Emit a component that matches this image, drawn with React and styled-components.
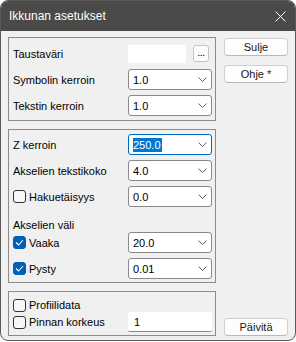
import React from 'react';
import styled, { createGlobalStyle } from 'styled-components';

const Global = createGlobalStyle`
  html, body { margin: 0; padding: 0; background: #ffffff; }
  body { font-family: "Liberation Sans", Arial, sans-serif; }
  * { box-sizing: border-box; }
`;

const Window = styled.div`
  width: 296px;
  height: 341px;
  border: 1px solid #5a5a5a;
  border-radius: 8px;
  overflow: hidden;
  background: #f0f0f0;
  display: flex;
  flex-direction: column;
`;

const TitleBar = styled.div`
  height: 30px;
  flex: none;
  background: #4a4a48;
  color: #ffffff;
  display: flex;
  align-items: center;
  justify-content: space-between;
  padding: 0 9px 0 8px;
  font-size: 12px;
`;

const CloseIcon = styled.svg`
  width: 11px;
  height: 11px;
  display: block;
`;

const Body = styled.div`
  flex: 1;
  display: flex;
  gap: 8px;
  padding: 6px 7px 3px 7px;
`;

const LeftCol = styled.div`
  width: 208px;
  display: flex;
  flex-direction: column;
  gap: 8px;
`;

const RightCol = styled.div`
  width: 64px;
  display: flex;
  flex-direction: column;
  padding: 1px 0 1px;
`;

const Group = styled.div`
  border: 1px solid #8c8c8c;
  height: ${p => p.$h}px;
  padding: ${p => p.$pt}px 3px 0 4px;
  display: flex;
  flex-direction: column;
`;

const Row = styled.div`
  display: flex;
  align-items: center;
  height: ${p => p.$h ?? 21}px;
  margin-top: ${p => p.$mt ?? 0}px;
  font-size: 11px;
  color: #000;
`;

const Label = styled.span`
  width: 115px;
  flex: none;
  display: flex;
  align-items: center;
  gap: 3px;
  white-space: nowrap;
`;

const SubLabel = styled.div`
  height: 13px;
  line-height: 13px;
  margin-top: 12px;
  font-size: 11px;
  color: #000;
`;

const Box = styled.span`
  width: 13px;
  height: 13px;
  flex: none;
  border-radius: 3px;
  border: 1px solid ${p => (p.$on ? '#005fb8' : '#333333')};
  background: ${p => (p.$on ? '#005fb8' : '#f7f7f7')};
  display: flex;
  align-items: center;
  justify-content: center;
`;

const Select = styled.div`
  width: 84px;
  height: 21px;
  background: #ffffff;
  border: 1px solid ${p => (p.$focus ? '#0067c0' : '#8a8a8a')};
  border-radius: 3px;
  display: flex;
  align-items: center;
  justify-content: space-between;
  padding: 0 4px 0 4px;
  font-size: 11px;
`;

const Value = styled.span`
  background: ${p => (p.$sel ? '#0078d7' : 'transparent')};
  color: ${p => (p.$sel ? '#ffffff' : '#000000')};
  line-height: 14px;
  padding-right: ${p => (p.$sel ? '1px' : '0')};
`;

const Chevron = styled.svg`
  width: 9px;
  height: 5px;
  display: block;
`;

const Swatch = styled.div`
  width: 58px;
  height: 18px;
  background: #ffffff;
`;

const DotsButton = styled.div`
  width: 16px;
  height: 17px;
  margin-left: 7px;
  border: 1px solid #c4c4c4;
  border-radius: 3px;
  background: #fdfdfd;
  font-size: 11px;
  line-height: 13px;
  text-align: center;
  letter-spacing: -0.5px;
`;

const TextInput = styled.div`
  width: 84px;
  height: 20px;
  background: #ffffff;
  border-bottom: 1px solid #868686;
  border-radius: 2px;
  padding-left: 6px;
  display: flex;
  align-items: center;
  font-size: 11px;
`;

const Button = styled.div`
  height: 18px;
  margin-top: ${p => (p.$push ? 'auto' : `${p.$mt ?? 0}px`)};
  border: 1px solid #cfcfcf;
  border-bottom-color: #b8b8b8;
  border-radius: 4px;
  background: #fdfdfd;
  font-size: 11px;
  color: #1a1a1a;
  display: flex;
  align-items: center;
  justify-content: center;
`;

const ChevronIcon = () => (
  <Chevron viewBox="0 0 9 5">
    <path d="M0.5 0.5 L4.5 4.5 L8.5 0.5" fill="none" stroke="#606060" strokeWidth="1" />
  </Chevron>
);

const Check = ({ on }) => (
  <Box $on={on}>
    {on && (
      <svg width="9" height="7" viewBox="0 0 9 7">
        <path d="M1 3.5 L3.5 6 L8 1" fill="none" stroke="#ffffff" strokeWidth="1.1" />
      </svg>
    )}
  </Box>
);

const Dropdown = ({ value, focus }) => (
  <Select $focus={focus}>
    <Value $sel={focus}>{value}</Value>
    <ChevronIcon />
  </Select>
);

export default function App() {
  return (
    <>
      <Global />
      <Window>
        <TitleBar>
          <span>Ikkunan asetukset</span>
          <CloseIcon viewBox="0 0 11 11">
            <path d="M0.5 0.5 L10.5 10.5 M10.5 0.5 L0.5 10.5" stroke="#ffffff" strokeWidth="1" />
          </CloseIcon>
        </TitleBar>
        <Body>
          <LeftCol>
            <Group $h={84} $pt={5}>
              <Row>
                <Label>Taustaväri</Label>
                <Swatch />
                <DotsButton>...</DotsButton>
              </Row>
              <Row $mt={5}>
                <Label>Symbolin kerroin</Label>
                <Dropdown value="1.0" />
              </Row>
              <Row $mt={5}>
                <Label>Tekstin kerroin</Label>
                <Dropdown value="1.0" />
              </Row>
            </Group>
            <Group $h={154} $pt={4}>
              <Row>
                <Label>Z kerroin</Label>
                <Dropdown value="250.0" focus />
              </Row>
              <Row $mt={5}>
                <Label>Akselien tekstikoko</Label>
                <Dropdown value="4.0" />
              </Row>
              <Row $mt={5}>
                <Label><Check />Hakuetäisyys</Label>
                <Dropdown value="0.0" />
              </Row>
              <SubLabel>Akselien väli</SubLabel>
              <Row>
                <Label><Check on />Vaaka</Label>
                <Dropdown value="20.0" />
              </Row>
              <Row $mt={5}>
                <Label><Check on />Pysty</Label>
                <Dropdown value="0.01" />
              </Row>
            </Group>
            <Group $h={45} $pt={6}>
              <Row $h={14}>
                <Label><Check />Profiilidata</Label>
              </Row>
              <Row $h={20}>
                <Label><Check />Pinnan korkeus</Label>
                <TextInput>1</TextInput>
              </Row>
            </Group>
          </LeftCol>
          <RightCol>
            <Button>Sulje</Button>
            <Button $mt={9}>Ohje *</Button>
            <Button $push>Päivitä</Button>
          </RightCol>
        </Body>
      </Window>
    </>
  );
}
